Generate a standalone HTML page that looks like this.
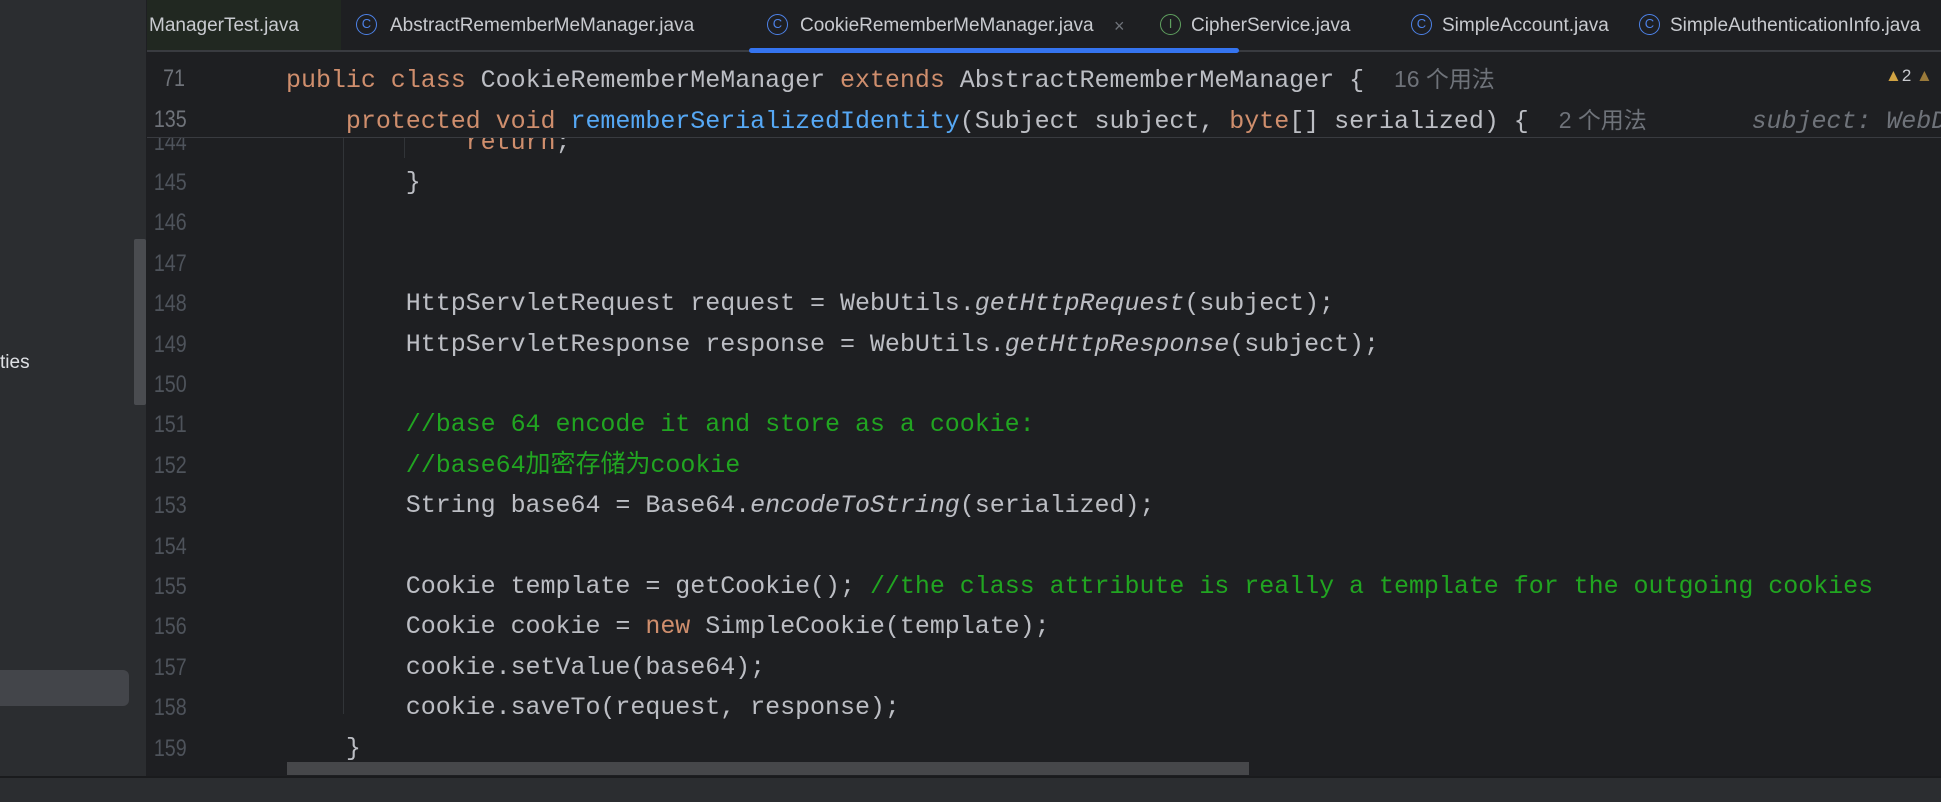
<!DOCTYPE html>
<html><head><meta charset="utf-8"><style>
*{margin:0;padding:0;box-sizing:border-box}
body{width:1941px;height:802px;background:#1e1f22;position:relative;overflow:hidden;font-family:"Liberation Mono","Noto Sans CJK SC",monospace}
.side{position:absolute;left:0;top:0;width:147px;height:776px;background:#2b2d30;border-right:1px solid #1e1f22}
.tabs{position:absolute;left:147px;top:0;width:1794px;height:52px;background:#1e1f22;border-bottom:2px solid #393b40}
.tab{position:absolute;top:0;height:50px;line-height:52px;font-family:"Liberation Sans",sans-serif;font-size:19px;color:#c8cacf;white-space:nowrap}
.tab span.t{display:inline-block;transform:scaleX(1);transform-origin:left center}
.ic{position:absolute;top:14px;width:21px;height:21px;border:1.6px solid #4d82e8;border-radius:50%;color:#4d82e8;font-size:13px;line-height:18px;text-align:center;font-family:"Liberation Sans",sans-serif}
.ln{position:absolute;left:147px;width:38px;text-align:right;font-size:24px;color:#4e535b;height:40px;line-height:40px;font-family:"Liberation Sans",sans-serif;transform:scaleX(.82);transform-origin:right center}
.cl{position:absolute;left:286px;height:40px;line-height:40px;font-size:25px;letter-spacing:-.03px;color:#bcbec4;white-space:pre}
.k{color:#cf8e6d}.m{color:#56a8f5}.c{color:#21a521}.i{font-style:italic}.h{color:#6f737a;font-family:"Liberation Sans","Noto Sans CJK SC",sans-serif;font-size:23px}
.clip{position:absolute;left:147px;top:138px;width:1794px;height:638px;overflow:hidden}
</style></head><body>
<div class="side">
 <div style="position:absolute;left:0;top:352px;font-family:'Liberation Sans',sans-serif;font-size:19px;color:#dfe1e5">ties</div>
 <div style="position:absolute;left:134px;top:239px;width:12px;height:166px;background:#4a4c50;border-radius:2px"></div>
 <div style="position:absolute;left:0;top:670px;width:129px;height:36px;background:#43454a;border-radius:0 6px 6px 0"></div>
</div>
<div class="tabs">
 <div style="position:absolute;left:0;top:0;width:194px;height:50px;background:#212821"></div>
 <div class="tab" style="left:2px"><span class="t">ManagerTest.java</span></div>
 <div class="ic" style="left:209px">C</div><div class="tab" style="left:243px"><span class="t">AbstractRememberMeManager.java</span></div>
 <div class="ic" style="left:620px">C</div><div class="tab" style="left:653px"><span class="t">CookieRememberMeManager.java</span></div>
 <div class="tab" style="left:967px;color:#6f737a;font-size:18px">×</div>
 <div style="position:absolute;left:602px;top:48px;width:490px;height:5px;background:#3574f0;border-radius:3px"></div>
 <div class="ic" style="left:1013px;border-color:#5fa05f;color:#5fa05f">I</div><div class="tab" style="left:1044px"><span class="t">CipherService.java</span></div>
 <div class="ic" style="left:1264px">C</div><div class="tab" style="left:1295px"><span class="t">SimpleAccount.java</span></div>
 <div class="ic" style="left:1492px">C</div><div class="tab" style="left:1523px"><span class="t">SimpleAuthenticationInfo.java</span></div>
</div>
<div class="ln" style="top:59px;color:#6f737a">71</div>
<div class="cl" style="top:59px"><span class="k">public class </span>CookieRememberMeManager <span class="k">extends </span>AbstractRememberMeManager {  <span class="h">16 个用法</span></div>
<div style="position:absolute;left:1885px;top:66px;font-family:'Liberation Sans',sans-serif;font-size:17px;color:#c8cacf"><span style="color:#d1a343">▲</span>2 <span style="color:#9a7a3a">▲</span></div>
<div class="ln" style="top:100px;color:#6f737a">135</div>
<div class="cl" style="top:100px">    <span class="k">protected void </span><span class="m">rememberSerializedIdentity</span>(Subject subject, <span class="k">byte</span>[] serialized) {  <span class="h">2 个用法</span>       <span class="i" style="color:#6f737a">subject: WebDel</span></div>
<div style="position:absolute;left:147px;top:137px;width:1794px;height:1px;background:#393b40"></div>
<div class="clip">
 <div style="position:absolute;left:196px;top:0;width:1px;height:576px;background:#313438"></div>
 <div style="position:absolute;left:257px;top:0;width:1px;height:20px;background:#313438"></div>
</div>
<div class="clip" style="z-index:0">
<div class="ln" style="left:0;top:-15px">144</div><div class="cl" style="left:139px;top:-15px">            <span class="k">return</span>;</div>
<div class="ln" style="left:0;top:25px">145</div><div class="cl" style="left:139px;top:25px">        }</div>
<div class="ln" style="left:0;top:65px">146</div>
<div class="ln" style="left:0;top:106px">147</div>
<div class="ln" style="left:0;top:146px">148</div><div class="cl" style="left:139px;top:146px">        HttpServletRequest request = WebUtils.<span class="i">getHttpRequest</span>(subject);</div>
<div class="ln" style="left:0;top:187px">149</div><div class="cl" style="left:139px;top:187px">        HttpServletResponse response = WebUtils.<span class="i">getHttpResponse</span>(subject);</div>
<div class="ln" style="left:0;top:227px">150</div>
<div class="ln" style="left:0;top:267px">151</div><div class="cl" style="left:139px;top:267px">        <span class="c">//base 64 encode it and store as a cookie:</span></div>
<div class="ln" style="left:0;top:308px">152</div><div class="cl" style="left:139px;top:308px">        <span class="c">//base64加密存储为cookie</span></div>
<div class="ln" style="left:0;top:348px">153</div><div class="cl" style="left:139px;top:348px">        String base64 = Base64.<span class="i">encodeToString</span>(serialized);</div>
<div class="ln" style="left:0;top:389px">154</div>
<div class="ln" style="left:0;top:429px">155</div><div class="cl" style="left:139px;top:429px">        Cookie template = getCookie(); <span class="c">//the class attribute is really a template for the outgoing cookies</span></div>
<div class="ln" style="left:0;top:469px">156</div><div class="cl" style="left:139px;top:469px">        Cookie cookie = <span class="k">new </span>SimpleCookie(template);</div>
<div class="ln" style="left:0;top:510px">157</div><div class="cl" style="left:139px;top:510px">        cookie.setValue(base64);</div>
<div class="ln" style="left:0;top:550px">158</div><div class="cl" style="left:139px;top:550px">        cookie.saveTo(request, response);</div>
<div class="ln" style="left:0;top:591px">159</div><div class="cl" style="left:139px;top:591px">    }</div>
<div style="position:absolute;left:140px;top:624px;width:962px;height:13px;background:#46474a"></div>
</div>
<div style="position:absolute;left:0;top:776px;width:1941px;height:26px;background:#2b2d30;border-top:2px solid #1a1b1d"></div>
</body></html>
